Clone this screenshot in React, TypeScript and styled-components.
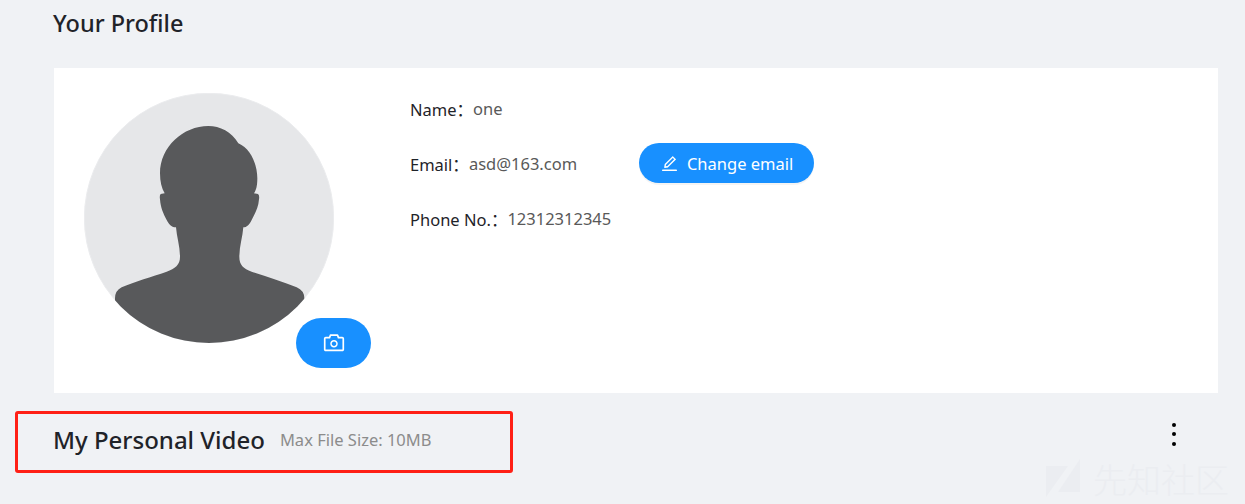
import styled, { createGlobalStyle } from "styled-components";
import { AiOutlineCamera, AiOutlineEdit } from "react-icons/ai";

const GlobalStyle = createGlobalStyle`
  html, body {
    margin: 0;
    padding: 0;
    background: #f0f2f5;
  }
  body {
    font-family: "Noto Sans", "Noto Sans CJK SC", sans-serif;
    color: #1f2329;
    overflow: hidden;
  }
`;

const Page = styled.div`
  position: relative;
  width: 1245px;
  height: 504px;
  box-sizing: border-box;
  padding: 0 27px 0 53px;
  overflow: hidden;
`;

const PageTitle = styled.h2`
  margin: 0 0 22px;
  height: 46px;
  font-size: 23.5px;
  line-height: 46px;
  font-weight: 500;
  color: #1f2329;
`;

const Card = styled.section`
  display: flex;
  height: 325px;
  box-sizing: border-box;
  margin-left: 1px;
  padding: 12px 30px;
  background: #fff;
`;

const AvatarWrap = styled.div`
  position: relative;
  flex: none;
  width: 250px;
  height: 250px;
  margin-top: 13px;
`;

const AvatarImage = styled.svg`
  display: block;
  width: 250px;
  height: 250px;
`;

const CameraButton = styled.button`
  position: absolute;
  left: 212px;
  top: 225px;
  display: flex;
  align-items: center;
  justify-content: center;
  width: 75px;
  height: 50px;
  padding: 0;
  border: 0;
  border-radius: 25px;
  background: #1890ff;
  color: #fff;
  font-size: 24px;
`;

const Info = styled.div`
  display: flex;
  flex-direction: column;
  margin-left: 76px;
`;

const InfoRow = styled.div`
  display: flex;
  align-items: center;
  height: 55px;
  font-size: 16.5px;
`;

const Label = styled.span`
  padding-top: 2px;
  color: #1f2329;
`;

const Value = styled.span`
  padding-top: 2px;
  color: #595959;
`;

const ChangeButton = styled.button`
  display: flex;
  align-items: center;
  justify-content: center;
  gap: 8px;
  width: 175px;
  height: 40px;
  margin-left: 62px;
  padding: 2px 0 0;
  border: 0;
  border-radius: 20px;
  background: #1890ff;
  box-shadow: 0 2px 0 rgba(0, 0, 0, 0.045);
  color: #fff;
  font-family: inherit;
  font-size: 16.5px;

  svg {
    font-size: 19px;
  }
`;

const VideoHeader = styled.div`
  display: flex;
  align-items: center;
  justify-content: space-between;
  height: 92px;
  padding-bottom: 4px;
`;

const VideoTitleGroup = styled.div`
  display: flex;
  align-items: center;
  gap: 15px;
`;

const VideoTitle = styled.h3`
  margin: 0;
  font-size: 24px;
  font-weight: 500;
  color: #1f2329;
`;

const VideoNote = styled.span`
  font-size: 16.5px;
  color: #8c8c8c;
`;

const MoreButton = styled.div`
  display: flex;
  flex-direction: column;
  gap: 5.5px;
  margin: -10px 42px 0 0;
`;

const Dot = styled.i`
  display: block;
  width: 4px;
  height: 4px;
  border-radius: 50%;
  background: #000;
`;

const Highlight = styled.div`
  position: absolute;
  left: 15px;
  top: 411px;
  width: 498px;
  height: 62px;
  box-sizing: border-box;
  border: 3px solid #ff2016;
  border-radius: 3px;
  pointer-events: none;
`;

const Watermark = styled.div`
  position: absolute;
  left: 1046px;
  top: 457px;
  display: flex;
  align-items: center;
  gap: 11px;
  color: #ebedf1;
  font-family: "Noto Sans CJK SC", sans-serif;
  font-size: 34px;
  line-height: 44px;
  font-weight: 300;
  white-space: nowrap;
`;

const WatermarkLogo = styled.svg`
  display: block;
  width: 36px;
  height: 40px;
`;

const Silhouette = () => (
  <AvatarImage viewBox="42 39 750 750">
    <defs>
      <clipPath id="avatar-clip">
        <circle cx="417" cy="414" r="375" />
      </clipPath>
    </defs>
    <circle cx="417" cy="414" r="374" fill="#e6e7e9" stroke="#ebecee" strokeWidth="3" />
    <path
      clipPath="url(#avatar-clip)"
      fill="#58595b"
      d="M415 138 C450 138 485 155 505 190 C540 205 562 250 562 295 C562 318 558 332 552 340 L564 342 Q569 346 567 358 C565 385 555 400 545 420 C538 435 530 442 520 442 C518 470 508 500 508 530 C508 555 520 565 545 575 C590 590 640 605 680 622 Q703 632 703 655 L703 800 L135 800 L135 655 Q135 632 155 622 C195 605 245 590 290 575 C315 565 330 555 330 530 C330 500 320 470 318 442 C305 442 298 435 290 420 C280 400 272 385 270 358 Q268 346 272 342 L284 340 C275 325 270 305 270 280 C270 200 340 138 415 138 Z"
    />
  </AvatarImage>
);

export default function App() {
  return (
    <>
      <GlobalStyle />
      <Page>
        <PageTitle>Your Profile</PageTitle>
        <Card>
          <AvatarWrap>
            <Silhouette />
            <CameraButton>
              <AiOutlineCamera />
            </CameraButton>
          </AvatarWrap>
          <Info>
            <InfoRow>
              <Label>Name：</Label>
              <Value>one</Value>
            </InfoRow>
            <InfoRow>
              <Label>Email：</Label>
              <Value>asd@163.com</Value>
              <ChangeButton>
                <AiOutlineEdit />
                Change email
              </ChangeButton>
            </InfoRow>
            <InfoRow>
              <Label>Phone No.：</Label>
              <Value>12312312345</Value>
            </InfoRow>
          </Info>
        </Card>
        <VideoHeader>
          <VideoTitleGroup>
            <VideoTitle>My Personal Video</VideoTitle>
            <VideoNote>Max File Size: 10MB</VideoNote>
          </VideoTitleGroup>
          <MoreButton>
            <Dot />
            <Dot />
            <Dot />
          </MoreButton>
        </VideoHeader>
        <Highlight />
        <Watermark>
          <WatermarkLogo viewBox="0 0 36 40">
            <polygon points="0,7 22,7 0,38" fill="#ebedf1" />
            <polygon points="34,0 34,33 12,33" fill="#ebedf1" />
          </WatermarkLogo>
          先知社区
        </Watermark>
      </Page>
    </>
  );
}
